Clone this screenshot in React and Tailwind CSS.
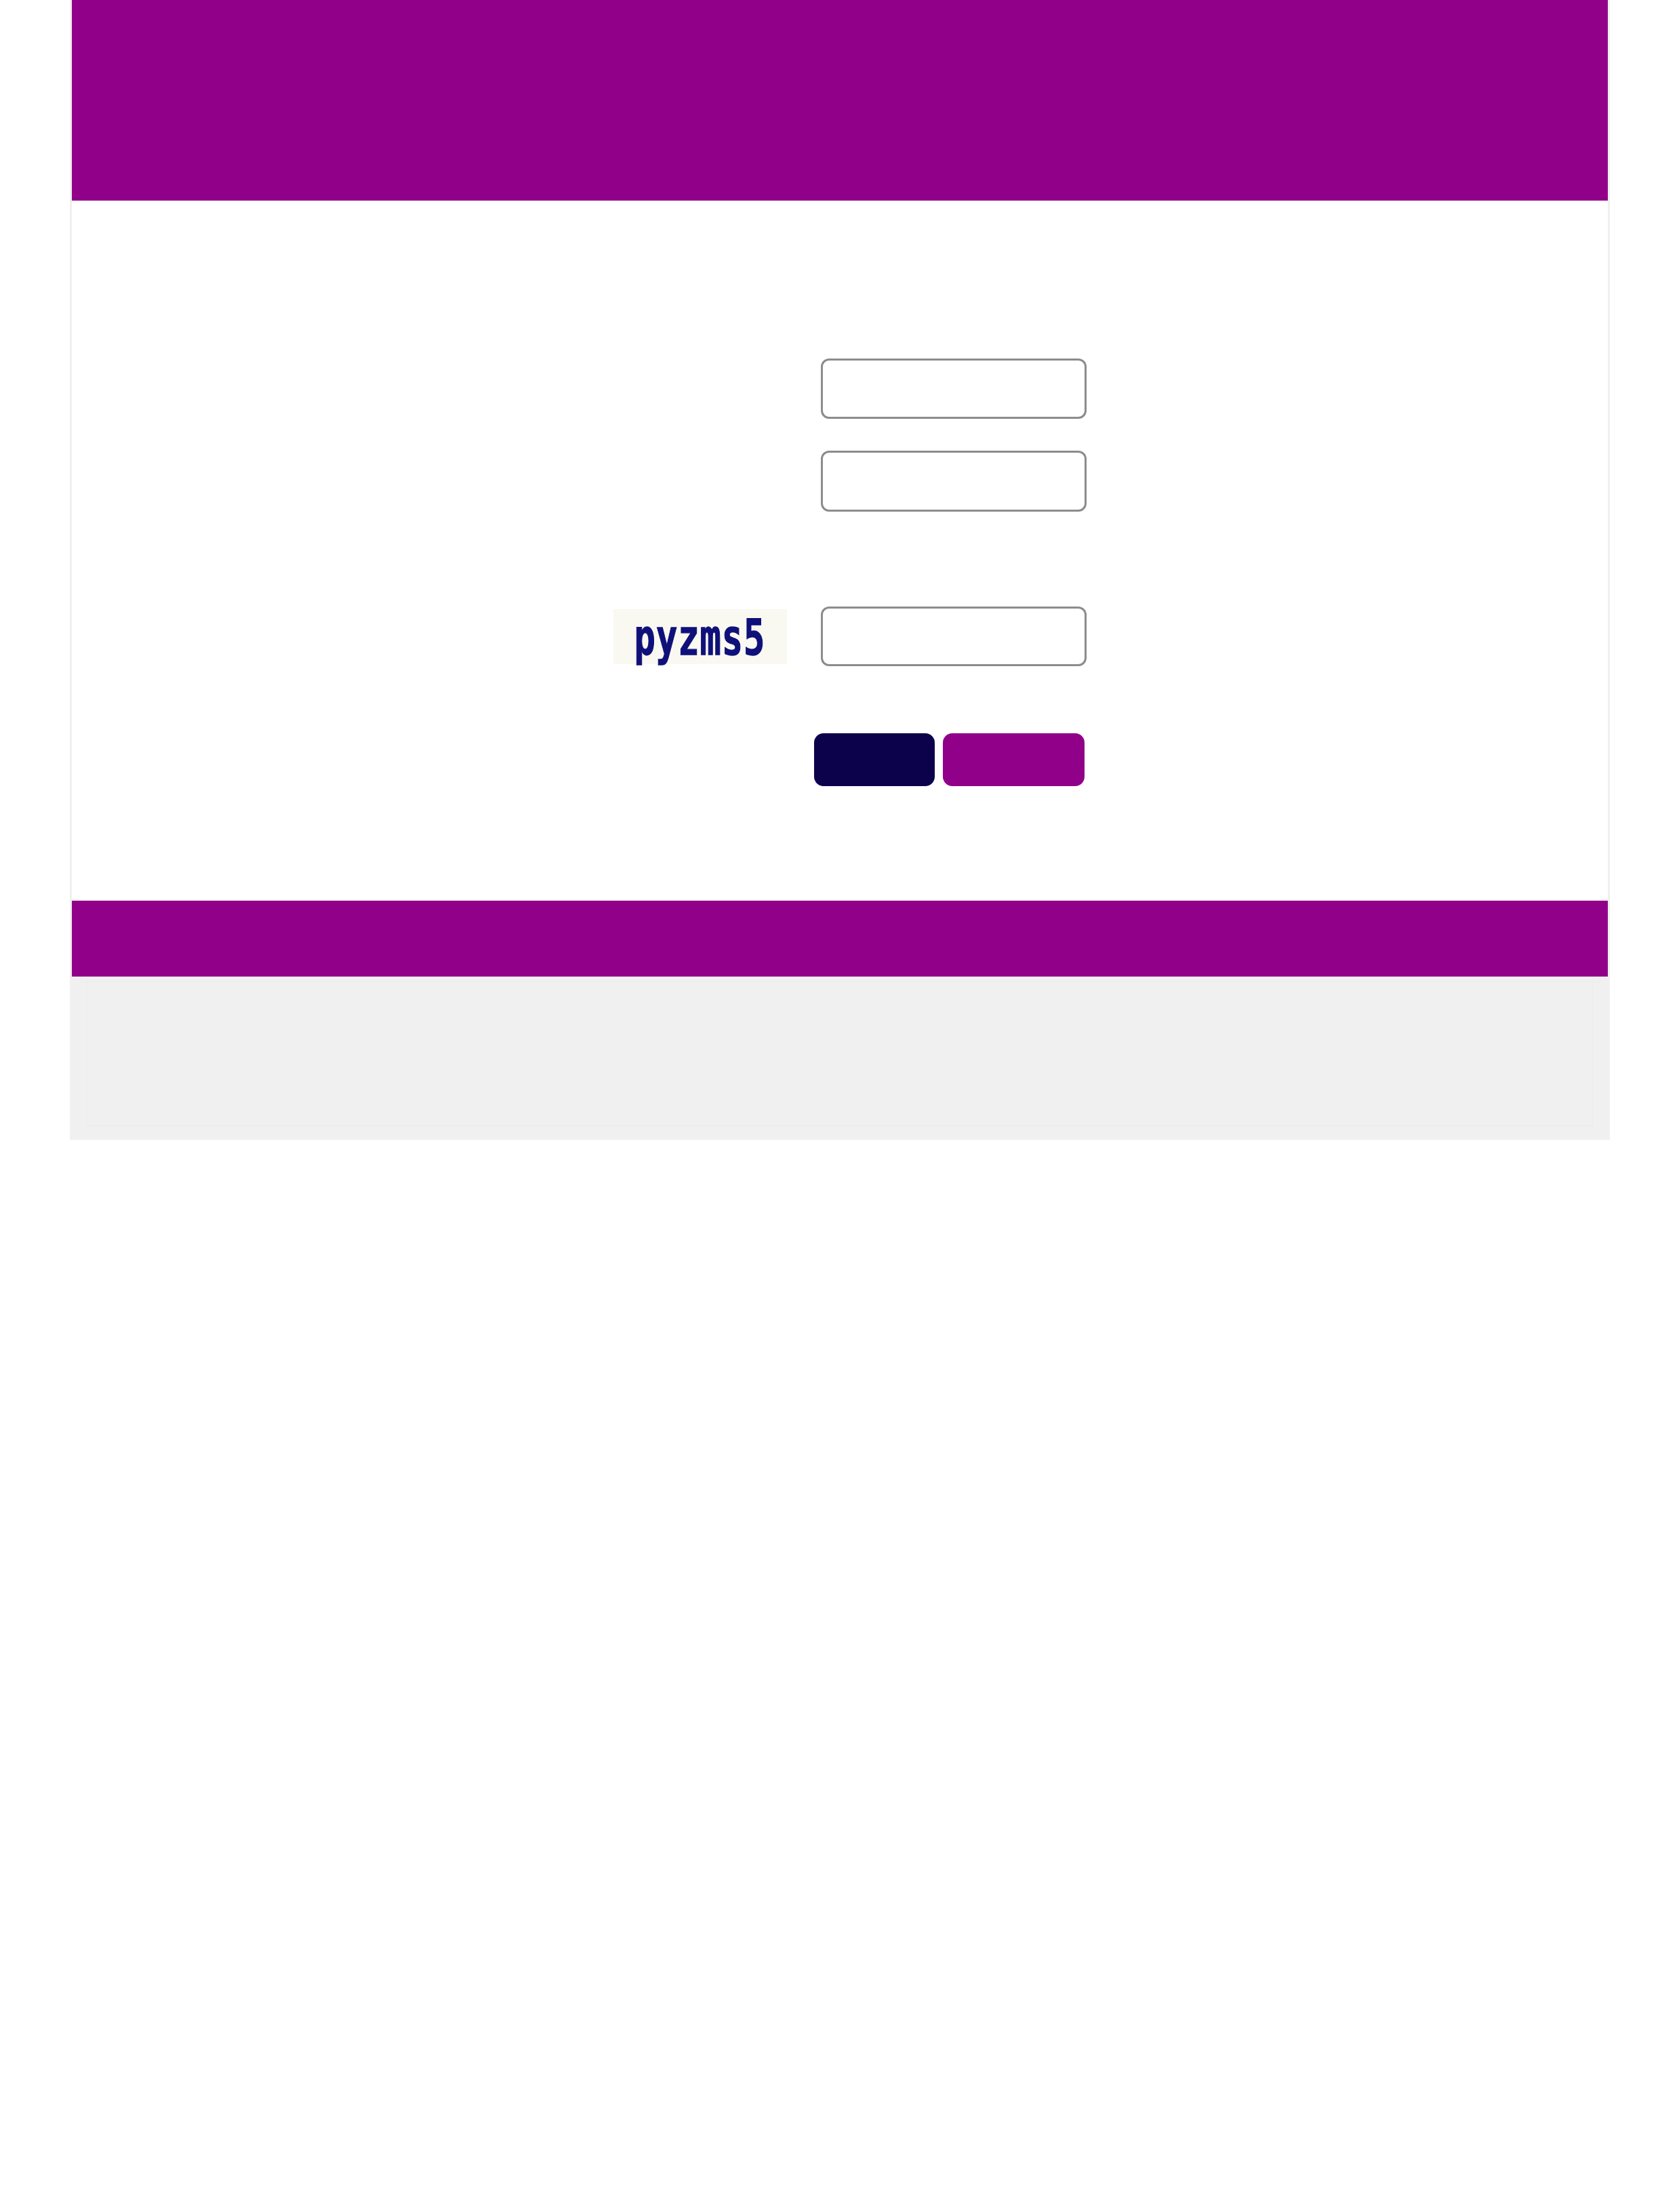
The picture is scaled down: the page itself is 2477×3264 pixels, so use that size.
export default function App() {
  return (
    <div className="min-h-[3264px] w-full bg-white" style={{ fontFamily: '"Liberation Sans", Arial, sans-serif' }}>
      <div className="mx-auto w-[2272px] bg-[#f0f0f0]">
        {/* header */}
        <div className="mx-[3px] h-[296px] bg-[#910089]" />
        {/* content */}
        <div className="mx-[3px] h-[1033px] bg-white pl-[799px] pt-[233px]">
          <div className="flex flex-col">
            <div className="flex items-center">
              <div className="w-[256px]" />
              <input className="ml-[50px] h-[89px] w-[392px] rounded-[12px] border-[3px] border-[#8c8c8c] bg-white outline-none" />
            </div>
            <div className="mt-[47px] flex items-center">
              <div className="w-[256px]" />
              <input className="ml-[50px] h-[90px] w-[392px] rounded-[12px] border-[3px] border-[#8c8c8c] bg-white outline-none" />
            </div>
            <div className="mt-[140px] flex items-center">
              <div className="flex h-[81px] w-[256px] items-center justify-center bg-[#f9f9f1]">
                <span
                  className="inline-block scale-y-[1.4] font-bold tracking-[1px] text-[#10107a] [-webkit-text-stroke:1px_#10107a]"
                  style={{ fontFamily: '"DejaVu Sans Mono", monospace', fontSize: '52px', lineHeight: '1', marginTop: '4px' }}
                >
                  pyzms5
                </span>
              </div>
              <input className="ml-[50px] h-[88px] w-[392px] rounded-[12px] border-[3px] border-[#8c8c8c] bg-white outline-none" />
            </div>
            <div className="mt-[99px] flex items-center pl-[296px]">
              <button className="h-[78px] w-[178px] rounded-[14px] bg-[#0c024b]" />
              <button className="ml-[12px] h-[78px] w-[209px] rounded-[14px] bg-[#910089]" />
            </div>
          </div>
        </div>
        {/* footer bar */}
        <div className="mx-[3px] h-[112px] bg-[#910089]" />
        {/* bottom gray */}
        <div className="h-[241px] px-[25px] pb-[20px] pt-[7px]">
          <div className="h-full w-full border border-[#ebebeb]" />
        </div>
      </div>
    </div>
  );
}
